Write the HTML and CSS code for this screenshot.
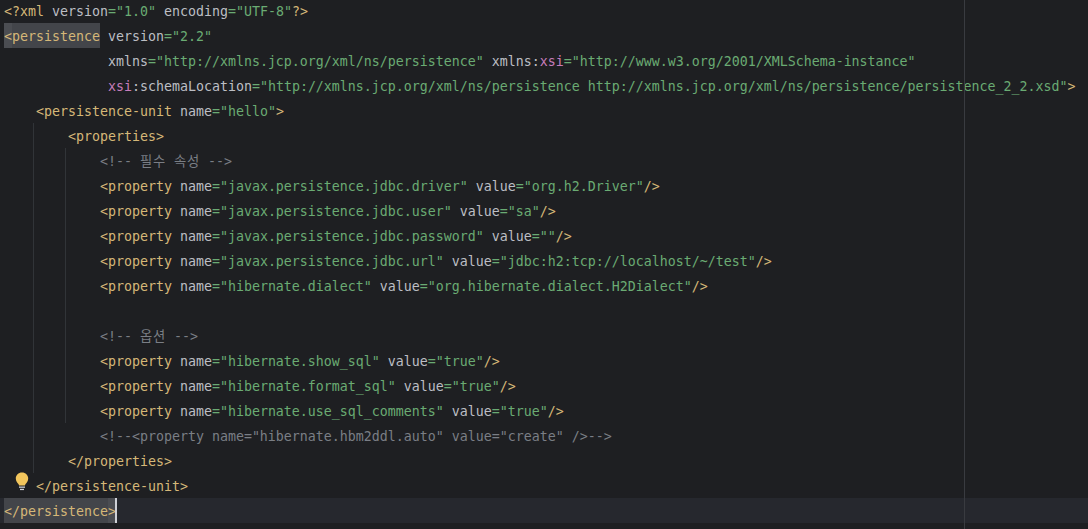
FILE: index.html
```html
<!DOCTYPE html>
<html lang="en">
<head>
<meta charset="UTF-8">
<title>persistence.xml</title>
<link rel="stylesheet" href="styles.css">
</head>
<body>
<main class="editor">
<div class="line"><span class="t">&lt;?xml </span><span class="a">version</span><span class="s">="1.0" </span><span class="a">encoding</span><span class="s">="UTF-8"</span><span class="t">?&gt;</span></div>
<div class="line"><span class="match"><span class="t brace">&lt;</span><span class="t">persistence</span></span> <span class="a">version</span><span class="s">="2.2"</span></div>
<div class="line">             <span class="a">xmlns</span><span class="s">="http://xmlns.jcp.org/xml/ns/persistence"</span> <span class="a">xmlns:</span><span class="n">xsi</span><span class="s">="http://www.w3.org/2001/XMLSchema-instance"</span></div>
<div class="line">             <span class="n">xsi</span><span class="a">:schemaLocation</span><span class="s">="http://xmlns.jcp.org/xml/ns/persistence http://xmlns.jcp.org/xml/ns/persistence/persistence_2_2.xsd"</span><span class="t">&gt;</span></div>
<div class="line">    <span class="t">&lt;persistence-unit</span> <span class="a">name</span><span class="s">="hello"</span><span class="t">&gt;</span></div>
<div class="line">        <span class="t">&lt;properties&gt;</span></div>
<div class="line">            <span class="c">&lt;!-- <span class="k">필수</span> <span class="k">속성</span> --&gt;</span></div>
<div class="line">            <span class="t">&lt;property</span> <span class="a">name</span><span class="s">="javax.persistence.jdbc.driver"</span> <span class="a">value</span><span class="s">="org.h2.Driver"</span><span class="t">/&gt;</span></div>
<div class="line">            <span class="t">&lt;property</span> <span class="a">name</span><span class="s">="javax.persistence.jdbc.user"</span> <span class="a">value</span><span class="s">="sa"</span><span class="t">/&gt;</span></div>
<div class="line">            <span class="t">&lt;property</span> <span class="a">name</span><span class="s">="javax.persistence.jdbc.password"</span> <span class="a">value</span><span class="s">=""</span><span class="t">/&gt;</span></div>
<div class="line">            <span class="t">&lt;property</span> <span class="a">name</span><span class="s">="javax.persistence.jdbc.url"</span> <span class="a">value</span><span class="s">="jdbc:h2:tcp://localhost/~/test"</span><span class="t">/&gt;</span></div>
<div class="line">            <span class="t">&lt;property</span> <span class="a">name</span><span class="s">="hibernate.dialect"</span> <span class="a">value</span><span class="s">="org.hibernate.dialect.H2Dialect"</span><span class="t">/&gt;</span></div>
<div class="line"> </div>
<div class="line">            <span class="c">&lt;!-- <span class="k">옵션</span> --&gt;</span></div>
<div class="line">            <span class="t">&lt;property</span> <span class="a">name</span><span class="s">="hibernate.show_sql"</span> <span class="a">value</span><span class="s">="true"</span><span class="t">/&gt;</span></div>
<div class="line">            <span class="t">&lt;property</span> <span class="a">name</span><span class="s">="hibernate.format_sql"</span> <span class="a">value</span><span class="s">="true"</span><span class="t">/&gt;</span></div>
<div class="line">            <span class="t">&lt;property</span> <span class="a">name</span><span class="s">="hibernate.use_sql_comments"</span> <span class="a">value</span><span class="s">="true"</span><span class="t">/&gt;</span></div>
<div class="line">            <span class="c">&lt;!--&lt;property name="hibernate.hbm2ddl.auto" value="create" /&gt;--&gt;</span></div>
<div class="line">        <span class="t">&lt;/properties&gt;</span></div>
<div class="line">    <span class="t">&lt;/persistence-unit&gt;</span></div>
<div class="line current"><span class="match"><span class="t">&lt;/persistence</span><span class="t brace">&gt;</span></span><span class="caret"></span></div>
<div class="guide guide-outer"></div>
<div class="guide guide-inner"></div>
<div class="margin-line"></div>
<svg class="bulb" width="14" height="20" viewBox="0 0 14 20" aria-hidden="true">
<path d="M7 0.5C3.4 0.5 0.8 3.2 0.8 6.5c0 2.6 1.5 4 2.6 5.6.4.6.5 1 .6 1.4h6c.1-.4.2-.8.6-1.400 1.100-1.600 2.600-3 2.600-5.600C13.200 3.200 10.600.5 7 .5z" fill="#f2c55c"/>
<rect x="4" y="14.500" width="6" height="1.300" fill="#ced0d6"/>
<rect x="5" y="16.800" width="4" height="1.300" fill="#ced0d6"/>
</svg>
</main>
</body>
</html>
```
FILE: styles.css
```css
html, body {
  margin: 0;
  padding: 0;
  height: 100%;
  background: #1e1f22;
  overflow: hidden;
}
.editor {
  position: relative;
  height: 531px;
  overflow: hidden;
  padding: 0 0 0 4px;
  margin-top: -2px;
  font-family: "DejaVu Sans Mono", "Noto Sans CJK KR", monospace;
  font-size: 13.29px;
  color: #bcbec4;
}
.line {
  height: 25px;
  line-height: 27px;
  white-space: pre;
}
.current {
  background: #26282e;
  margin-left: -4px;
  padding-left: 4px;
}
.match {
  display: inline-block;
  height: 25px;
  background: #43454a;
}
.brace {
  display: inline-block;
  height: 25px;
  background: #4b4d52;
}
.t { color: #d5b778; }
.a { color: #bcbec4; }
.s { color: #6aab73; }
.n { color: #c77dbb; }
.c { color: #7a7e85; }
.k { letter-spacing: 0.8px; }
.caret {
  display: inline-block;
  width: 2px;
  height: 25px;
  background: #ced0d6;
  vertical-align: top;
  margin-left: -1px;
}
.guide {
  position: absolute;
  width: 1px;
  background: #313438;
}
.guide-outer { left: 33px; top: 125px; height: 350px; }
.guide-inner { left: 65px; top: 150px; height: 275px; }
.margin-line {
  position: absolute;
  left: 964px;
  top: 0;
  bottom: 0;
  width: 1px;
  background: #393b40;
}
.bulb {
  position: absolute;
  left: 15px;
  top: 474px;
}
```
